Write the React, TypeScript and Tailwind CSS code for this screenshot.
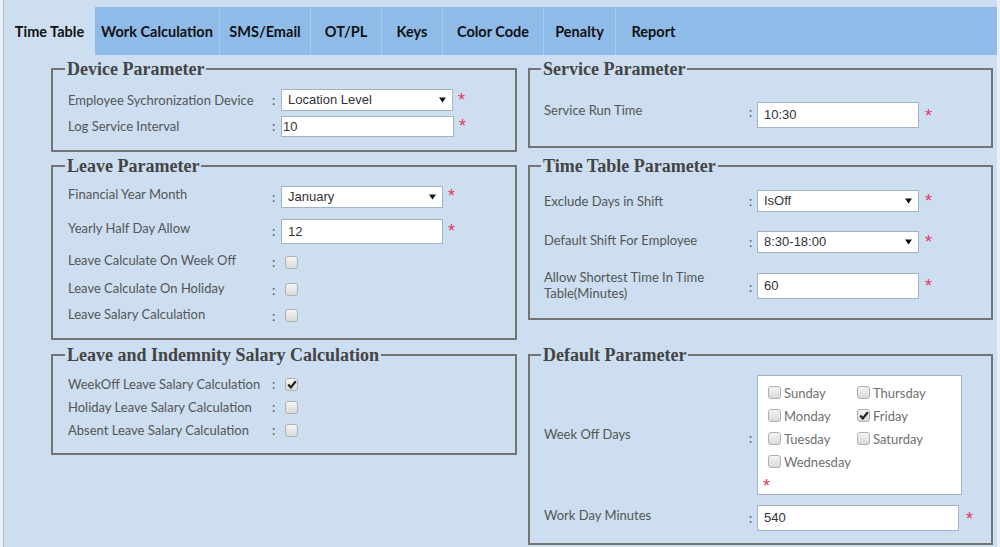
import clsx from "clsx";
import type { ReactNode } from "react";

const tabs = [
  { label: "Time Table", w: "w-[91px]", active: true },
  { label: "Work Calculation", w: "w-[125px]" },
  { label: "SMS/Email", w: "w-[91px]" },
  { label: "OT/PL", w: "w-[71px]" },
  { label: "Keys", w: "w-[61px]" },
  { label: "Color Code", w: "w-[101px]" },
  { label: "Penalty", w: "w-[72px]" },
  { label: "Report", w: "w-[75px]", last: true },
];

const labelFont = "font-['Lato','Open_Sans',sans-serif] text-[13px] leading-[16px]";
const inputFont = "font-['Liberation_Sans',Arial,sans-serif] text-[13px] text-[#333]";

function Req({ className }: { className?: string }) {
  return (
    <span
      className={clsx(
        "shrink-0 font-['Liberation_Sans',Arial,sans-serif] text-[18px] leading-[18px] text-[#e8365d]",
        className
      )}
    >
      *
    </span>
  );
}

function Select({ value, className }: { value: string; className?: string }) {
  return (
    <div
      className={clsx(
        "flex shrink-0 items-center justify-between border border-[#a3b3c4] bg-white pl-[6px] pr-[6px]",
        inputFont,
        className
      )}
    >
      <span>{value}</span>
      <svg width="7" height="6" viewBox="0 0 7 6" aria-hidden="true">
        <path d="M0 0.5h7L3.5 5.5z" fill="#111" />
      </svg>
    </div>
  );
}

function Input({ value, className }: { value: string; className?: string }) {
  return (
    <div
      className={clsx(
        "flex shrink-0 items-center border border-[#a3b3c4] bg-white",
        inputFont,
        className
      )}
    >
      {value}
    </div>
  );
}

function Check({ checked, className }: { checked?: boolean; className?: string }) {
  return (
    <span
      className={clsx(
        "flex h-[13px] w-[13px] shrink-0 items-center justify-center rounded-[3px] border border-[#b0b0b0] bg-gradient-to-b from-[#f4f4f4] to-[#d9d9d9]",
        className
      )}
    >
      {checked && (
        <svg width="10" height="9" viewBox="0 0 10 9" aria-hidden="true">
          <path d="M1.2 4.6 3.8 7.4 8.8 1.2" fill="none" stroke="#222" strokeWidth="2.2" />
        </svg>
      )}
    </span>
  );
}

function Field({
  label,
  className,
  labelClass,
  colonClass,
  children,
}: {
  label: ReactNode;
  className?: string;
  labelClass?: string;
  colonClass?: string;
  children: ReactNode;
}) {
  return (
    <div className={clsx("flex items-start", className)}>
      <div className={clsx("shrink-0 text-[#555]", labelFont, labelClass)}>{label}</div>
      <div className={clsx("shrink-0 text-[#555]", labelFont, colonClass)}>:</div>
      {children}
    </div>
  );
}

function Box({
  title,
  className,
  legendClass,
  children,
}: {
  title: string;
  className?: string;
  legendClass?: string;
  children: ReactNode;
}) {
  return (
    <fieldset className={clsx("m-0 min-w-0 border-2 border-[#747474] p-0", className)}>
      <legend
        className={clsx(
          "px-[2px] font-['Liberation_Serif','Times_New_Roman',serif] text-[18px] leading-[20px] font-bold text-[#444]",
          legendClass
        )}
      >
        {title}
      </legend>
      {children}
    </fieldset>
  );
}

const days = [
  { d: "Sunday" },
  { d: "Thursday" },
  { d: "Monday" },
  { d: "Friday", checked: true },
  { d: "Tuesday" },
  { d: "Saturday" },
  { d: "Wednesday" },
];

export default function App() {
  return (
    <div className="flex min-h-screen bg-[#ccdef0]">
      <div className="w-[4px] shrink-0 border-r border-[#b3c1cf] bg-[#eaeff5]" />
      <div className="w-[993px] shrink-0 pt-[7px]">
        {/* Tabs */}
        <div className="flex h-[48px] bg-[#8fbbe9]">
          {tabs.map((t) => (
            <div
              key={t.label}
              className={clsx(
                "flex items-center justify-center pt-[2px] font-['Lato','Open_Sans',sans-serif] text-[14.5px] font-bold text-[#111]",
                t.w,
                t.active ? "bg-[#ccdef0]" : t.last ? "" : "border-r border-[#a9c8ec]"
              )}
            >
              {t.label}
            </div>
          ))}
        </div>

        {/* Content */}
        <div className="grid grid-cols-[466px_465px] items-start gap-x-[11px] gap-y-[4px] pt-[4px] pl-[47px]">
          {/* Device Parameter */}
          <Box title="Device Parameter" className="h-[93px]" legendClass="ml-[12px]">
            <div className="flex flex-col pl-[15px]">
              <Field
                label="Employee Sychronization Device"
                className="mt-[10px]"
                labelClass="w-[204px] pt-[3px]"
                colonClass="w-[9px] pt-[3px]"
              >
                <Select value="Location Level" className="h-[22px] w-[172px]" />
                <Req className="mt-[2px] ml-[5px]" />
              </Field>
              <Field
                label="Log Service Interval"
                className="mt-[5px]"
                labelClass="w-[204px] pt-[2px]"
                colonClass="w-[9px] pt-[2px]"
              >
                <Input value="10" className="h-[21px] w-[173px] pl-[1px]" />
                <Req className="mt-[1px] ml-[5px]" />
              </Field>
            </div>
          </Box>

          {/* Service Parameter */}
          <Box title="Service Parameter" className="h-[89px]" legendClass="ml-[11px]">
            <div className="flex flex-col pl-[14px]">
              <Field
                label="Service Run Time"
                className="mt-[23px]"
                labelClass="w-[205px]"
                colonClass="w-[8px] pt-[2px]"
              >
                <Input value="10:30" className="h-[26px] w-[162px] pl-[6px]" />
                <Req className="mt-[5px] ml-[6px]" />
              </Field>
            </div>
          </Box>

          {/* Leave Parameter */}
          <Box title="Leave Parameter" className="h-[184px]" legendClass="ml-[12px]">
            <div className="flex flex-col pl-[15px]">
              <Field
                label="Financial Year Month"
                className="mt-[10px]"
                labelClass="w-[204px]"
                colonClass="w-[9px] pt-[3px]"
              >
                <Select value="January" className="h-[22px] w-[162px]" />
                <Req className="mt-[1px] ml-[5px]" />
              </Field>
              <Field
                label="Yearly Half Day Allow"
                className="mt-[11px]"
                labelClass="w-[204px] pt-[1px]"
                colonClass="w-[9px] pt-[4px]"
              >
                <Input value="12" className="h-[25px] w-[162px] pl-[6px]" />
                <Req className="mt-[3px] ml-[5px]" />
              </Field>
              <Field
                label="Leave Calculate On Week Off"
                className="mt-[8px] h-[28px]"
                labelClass="w-[204px]"
                colonClass="w-[9px] pt-[2px]"
              >
                <Check className="mt-[4px] ml-[4px]" />
              </Field>
              <Field
                label="Leave Calculate On Holiday"
                className="h-[26px]"
                labelClass="w-[204px]"
                colonClass="w-[9px] pt-[2px]"
              >
                <Check className="mt-[3px] ml-[4px]" />
              </Field>
              <Field
                label="Leave Salary Calculation"
                className="h-[26px]"
                labelClass="w-[204px]"
                colonClass="w-[9px] pt-[2px]"
              >
                <Check className="mt-[3px] ml-[4px]" />
              </Field>
            </div>
          </Box>

          {/* Time Table Parameter */}
          <Box title="Time Table Parameter" className="h-[164px]" legendClass="ml-[11px]">
            <div className="flex flex-col pl-[14px]">
              <Field
                label="Exclude Days in Shift"
                className="mt-[14px]"
                labelClass="w-[205px] pt-[3px]"
                colonClass="w-[8px] pt-[3px]"
              >
                <Select value="IsOff" className="h-[22px] w-[162px]" />
                <Req className="mt-[2px] ml-[6px]" />
              </Field>
              <Field
                label="Default Shift For Employee"
                className="mt-[19px]"
                labelClass="w-[205px] pt-[1px]"
                colonClass="w-[8px] pt-[3px]"
              >
                <Select value="8:30-18:00" className="h-[22px] w-[162px]" />
                <Req className="mt-[2px] ml-[6px]" />
              </Field>
              <Field
                label={
                  <>
                    Allow Shortest Time In Time
                    <br />
                    Table(Minutes)
                  </>
                }
                className="mt-[16px]"
                labelClass="w-[205px]"
                colonClass="w-[8px] pt-[10px]"
              >
                <Input value="60" className="mt-[4px] h-[26px] w-[162px] pl-[6px]" />
                <Req className="mt-[8px] ml-[6px]" />
              </Field>
            </div>
          </Box>

          {/* Leave and Indemnity Salary Calculation */}
          <Box
            title="Leave and Indemnity Salary Calculation"
            className="mt-[1px] h-[110px]"
            legendClass="ml-[12px]"
          >
            <div className="flex flex-col pl-[15px] pt-[11px]">
              {[
                { l: "WeekOff Leave Salary Calculation", c: true },
                { l: "Holiday Leave Salary Calculation" },
                { l: "Absent Leave Salary Calculation" },
              ].map((r) => (
                <Field
                  key={r.l}
                  label={r.l}
                  className="h-[23px]"
                  labelClass="w-[204px]"
                  colonClass="w-[9px]"
                >
                  <Check checked={r.c} className="mt-[2px] ml-[4px]" />
                </Field>
              ))}
            </div>
          </Box>

          {/* Default Parameter */}
          <Box title="Default Parameter" className="mt-[1px] h-[200px]" legendClass="ml-[11px]">
            <div className="flex flex-col pl-[14px]">
              <Field
                label="Week Off Days"
                className="mt-[10px]"
                labelClass="w-[205px] pt-[51px]"
                colonClass="w-[8px] pt-[55px]"
              >
                <div className="h-[120px] w-[205px] shrink-0 border border-[#a3b3c4] bg-white pt-[9px]">
                  <div className="grid grid-cols-[89px_1fr] pl-[10px]">
                    {days.map((x) => (
                      <div key={x.d} className="flex h-[23px] items-start">
                        <Check checked={x.checked} className="mt-[1px]" />
                        <span className={clsx("ml-[3px] text-[#6f6f6f]", labelFont)}>{x.d}</span>
                      </div>
                    ))}
                  </div>
                  <div className="flex pl-[5px]">
                    <Req />
                  </div>
                </div>
              </Field>
              <Field
                label="Work Day Minutes"
                className="mt-[10px]"
                labelClass="w-[205px] pt-[2px]"
                colonClass="w-[8px] pt-[5px]"
              >
                <Input value="540" className="h-[26px] w-[202px] pl-[6px]" />
                <Req className="mt-[5px] ml-[7px]" />
              </Field>
            </div>
          </Box>
        </div>
      </div>
      <div className="flex-1 bg-[#eaeff5]" />
    </div>
  );
}
